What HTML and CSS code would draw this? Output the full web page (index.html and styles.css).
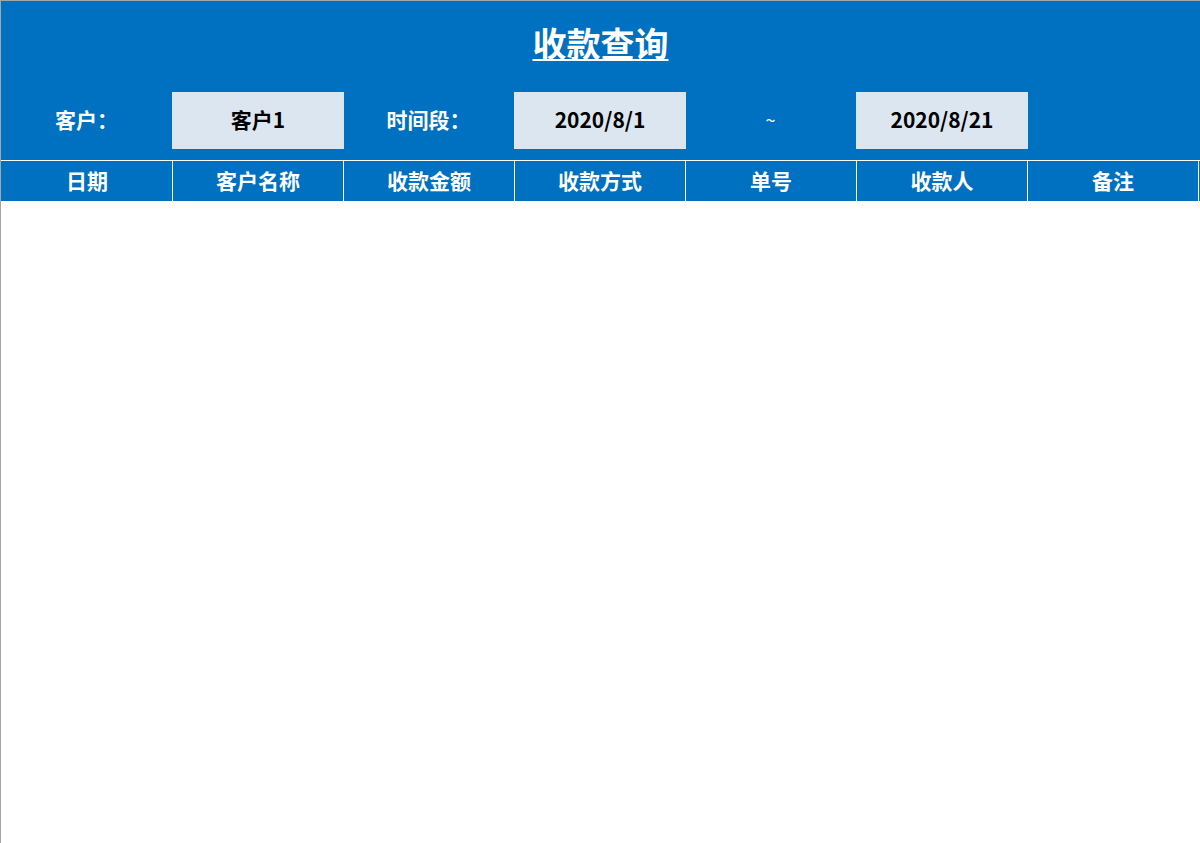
FILE: index.html
```html
<!DOCTYPE html>
<html lang="zh-CN">
<head>
<meta charset="utf-8">
<title>收款查询</title>
<link rel="stylesheet" href="styles.css">
</head>
<body>
<div class="sheet">
  <div class="panel">
    <div class="title-row"><h1 class="title">收款查询</h1></div>
    <div class="filter-row">
      <div class="cell label">客户：</div>
      <div class="cell input">客户1</div>
      <div class="cell label">时间段：</div>
      <div class="cell input">2020/8/1</div>
      <div class="cell label tilde">~</div>
      <div class="cell input">2020/8/21</div>
      <div class="cell"></div>
    </div>
    <div class="header-row">
      <div class="hcell">日期</div>
      <div class="hcell">客户名称</div>
      <div class="hcell">收款金额</div>
      <div class="hcell">收款方式</div>
      <div class="hcell">单号</div>
      <div class="hcell">收款人</div>
      <div class="hcell">备注</div>
    </div>
  </div>
</div>
</body>
</html>
```
FILE: styles.css
```css
html, body {
  margin: 0;
  padding: 0;
  background: #ffffff;
}
body {
  font-family: "Noto Sans CJK SC", "Noto Sans", sans-serif;
  width: 1200px;
  height: 843px;
  overflow: hidden;
}
.sheet {
  box-sizing: border-box;
  height: 843px;
  border-top: 1px solid #a6a6a6;
  border-left: 1px solid #a6a6a6;
}
.panel {
  background: #0070c0;
  width: 1199px;
}
.title-row {
  height: 90px;
  display: flex;
  justify-content: center;
}
.title {
  margin: 20px 0 0 0;
  font-size: 34px;
  line-height: 44px;
  height: 44px;
  font-weight: 700;
  color: #ffffff;
  text-decoration: underline;
  text-decoration-thickness: 2px;
  text-underline-offset: 2px;
}
.filter-row {
  display: grid;
  grid-template-columns: repeat(7, 171px);
  height: 58px;
  padding-bottom: 11px;
}
.cell {
  display: flex;
  align-items: center;
  justify-content: center;
  font-size: 21px;
  font-weight: 700;
  color: #ffffff;
  padding-bottom: 3px;
  box-sizing: border-box;
}
.input {
  background: #dce6f1;
  color: #000000;
  width: 172px;
  margin-top: 1px;
  height: 57px;
}
.tilde {
  font-weight: 400;
  font-size: 18px;
}
.header-row {
  display: grid;
  grid-template-columns: repeat(7, 171px);
  padding-left: 1px;
  border-top: 1px solid #ffffff;
  border-bottom: 1px solid #ffffff;
  height: 40px;
}
.hcell {
  display: flex;
  align-items: center;
  justify-content: center;
  border-right: 1px solid #ffffff;
  font-size: 21px;
  font-weight: 700;
  color: #ffffff;
  padding-bottom: 3px;
}
```
